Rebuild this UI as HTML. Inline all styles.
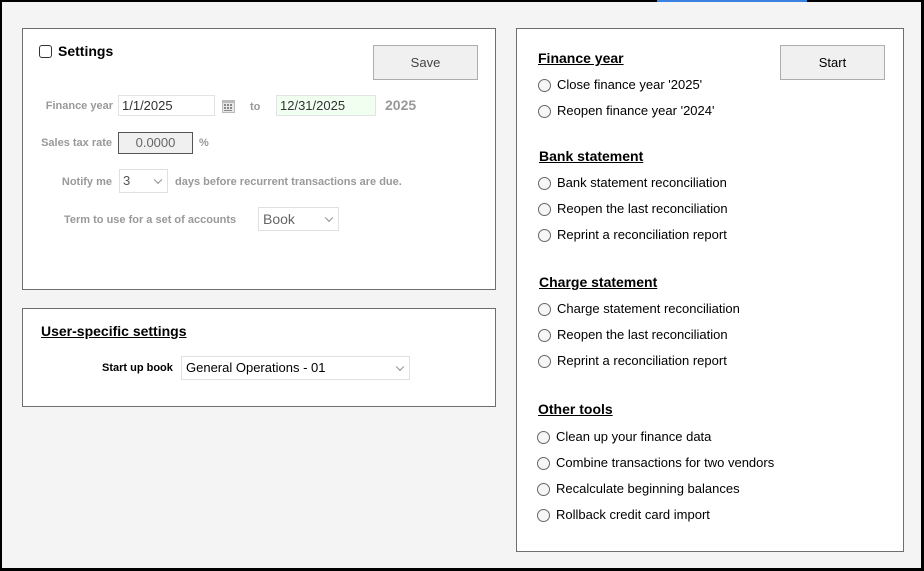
<!DOCTYPE html>
<html><head><meta charset="utf-8"><style>
*{box-sizing:border-box;margin:0;padding:0}
body{width:924px;height:571px;background:#f4f4f4;position:relative;overflow:hidden;font-family:"Liberation Sans",sans-serif;font-size:13px;color:#000}
.a{position:absolute;white-space:nowrap}
.panel{position:absolute;background:#fff;border:1px solid #6e6e6e}
.lbl{color:#999;font-weight:bold;font-size:11px}
.h{font-weight:bold;font-size:14px;text-decoration:underline}
.r{position:absolute;width:13px;height:13px;border:1px solid #666;border-radius:50%;background:#f6f6f6}
.btn{position:absolute;background:#f0f0f0;border:1px solid #adadad;text-align:center;font-size:13px}
.inp{position:absolute;border:1px solid #e3e3e3;background:#fff;padding-left:3px;font-size:13px}
.sel{position:absolute;border:1px solid #e0e0e0;background:#fff;padding-left:5px;font-size:13px}
.chev{position:absolute;right:6px;top:50%;width:6px;height:6px;border-right:1px solid #888;border-bottom:1px solid #888;transform:translateY(-70%) rotate(45deg)}
</style></head><body>
<div class="a" style="left:0;top:0;width:924px;height:2px;background:#000"></div>
<div class="a" style="left:0;top:0;width:2px;height:571px;background:#000"></div>
<div class="a" style="left:921px;top:0;width:3px;height:571px;background:#000"></div>
<div class="a" style="left:0;top:568px;width:924px;height:3px;background:#000"></div>
<div class="a" style="left:657px;top:0;width:150px;height:2px;background:#3b82e0"></div>

<div class="panel" style="left:22px;top:28px;width:474px;height:262px"></div>
<div class="a" style="left:39px;top:45px;width:13px;height:13px;border:1px solid #333;border-radius:3px;background:#fff"></div>
<div class="a" style="left:58px;top:42px;font-weight:bold;font-size:14px;line-height:18px">Settings</div>
<div class="btn" style="left:373px;top:45px;width:105px;height:35px;line-height:33px;color:#444">Save</div>
<div class="a lbl" style="left:20px;width:93px;text-align:right;top:99px;line-height:14px">Finance year</div>
<div class="inp" style="left:118px;top:95px;width:97px;height:21px;line-height:19px;color:#333">1/1/2025</div>
<svg class="a" style="left:221px;top:99px" width="15" height="15" viewBox="0 0 15 15"><rect x="1" y="1" width="13" height="13" fill="#bbb"/><rect x="2" y="4" width="11" height="9" fill="#e8e8e8"/><g fill="#888"><rect x="3" y="5" width="2" height="2"/><rect x="6" y="5" width="2" height="2"/><rect x="9" y="5" width="2" height="2"/><rect x="3" y="8" width="2" height="2"/><rect x="6" y="8" width="2" height="2"/><rect x="9" y="8" width="2" height="2"/><rect x="3" y="11" width="8" height="1"/></g></svg>
<div class="a lbl" style="left:250px;top:100px;line-height:14px">to</div>
<div class="inp" style="left:276px;top:95px;width:100px;height:21px;line-height:19px;background:#f0fff0;color:#333">12/31/2025</div>
<div class="a" style="left:385px;top:97px;font-weight:bold;font-size:14px;color:#999;line-height:16px">2025</div>
<div class="a lbl" style="left:20px;width:92px;text-align:right;top:136px;line-height:14px">Sales tax rate</div>
<div class="a" style="left:118px;top:132px;width:75px;height:22px;border:1px solid #555;background:#f0f0f0;text-align:center;line-height:20px;color:#666">0.0000</div>
<div class="a lbl" style="left:199px;top:136px;line-height:14px">%</div>
<div class="a lbl" style="left:20px;width:92px;text-align:right;top:175px;line-height:14px">Notify me</div>
<div class="sel" style="left:119px;top:169px;width:49px;height:24px;line-height:22px;padding-left:3px;color:#555">3<div class="chev"></div></div>
<div class="a lbl" style="left:175px;top:175px;line-height:14px">days before recurrent transactions are due.</div>
<div class="a lbl" style="left:64px;top:213px;line-height:14px">Term to use for a set of accounts</div>
<div class="sel" style="left:258px;top:207px;width:81px;height:24px;line-height:22px;padding-left:4px;font-size:14px;color:#666">Book<div class="chev"></div></div>

<div class="panel" style="left:22px;top:308px;width:474px;height:99px"></div>
<div class="a h" style="left:41px;top:323px;line-height:17px">User-specific settings</div>
<div class="a" style="left:102px;top:361px;font-weight:bold;font-size:11px;line-height:14px">Start up book</div>
<div class="sel" style="left:181px;top:356px;width:229px;height:24px;line-height:22px;padding-left:4px">General Operations - 01<div class="chev"></div></div>

<div class="panel" style="left:516px;top:28px;width:388px;height:524px"></div>
<div class="btn" style="left:780px;top:45px;width:105px;height:35px;line-height:33px">Start</div>
<div class="a h" style="left:538px;top:50px;line-height:17px">Finance year</div>
<div class="r" style="left:538px;top:79px"></div><div class="a" style="left:557px;top:77px;line-height:16px">Close finance year '2025'</div>
<div class="r" style="left:538px;top:105px"></div><div class="a" style="left:557px;top:103px;line-height:16px">Reopen finance year '2024'</div>
<div class="a h" style="left:539px;top:148px;line-height:17px">Bank statement</div>
<div class="r" style="left:538px;top:177px"></div><div class="a" style="left:557px;top:175px;line-height:16px">Bank statement reconciliation</div>
<div class="r" style="left:538px;top:203px"></div><div class="a" style="left:557px;top:201px;line-height:16px">Reopen the last reconciliation</div>
<div class="r" style="left:538px;top:229px"></div><div class="a" style="left:557px;top:227px;line-height:16px">Reprint a reconciliation report</div>
<div class="a h" style="left:539px;top:274px;line-height:17px">Charge statement</div>
<div class="r" style="left:538px;top:303px"></div><div class="a" style="left:557px;top:301px;line-height:16px">Charge statement reconciliation</div>
<div class="r" style="left:538px;top:329px"></div><div class="a" style="left:557px;top:327px;line-height:16px">Reopen the last reconciliation</div>
<div class="r" style="left:538px;top:355px"></div><div class="a" style="left:557px;top:353px;line-height:16px">Reprint a reconciliation report</div>
<div class="a h" style="left:538px;top:401px;line-height:17px">Other tools</div>
<div class="r" style="left:537px;top:431px"></div><div class="a" style="left:556px;top:429px;line-height:16px">Clean up your finance data</div>
<div class="r" style="left:537px;top:457px"></div><div class="a" style="left:556px;top:455px;line-height:16px">Combine transactions for two vendors</div>
<div class="r" style="left:537px;top:483px"></div><div class="a" style="left:556px;top:481px;line-height:16px">Recalculate beginning balances</div>
<div class="r" style="left:537px;top:509px"></div><div class="a" style="left:556px;top:507px;line-height:16px">Rollback credit card import</div>
</body></html>
